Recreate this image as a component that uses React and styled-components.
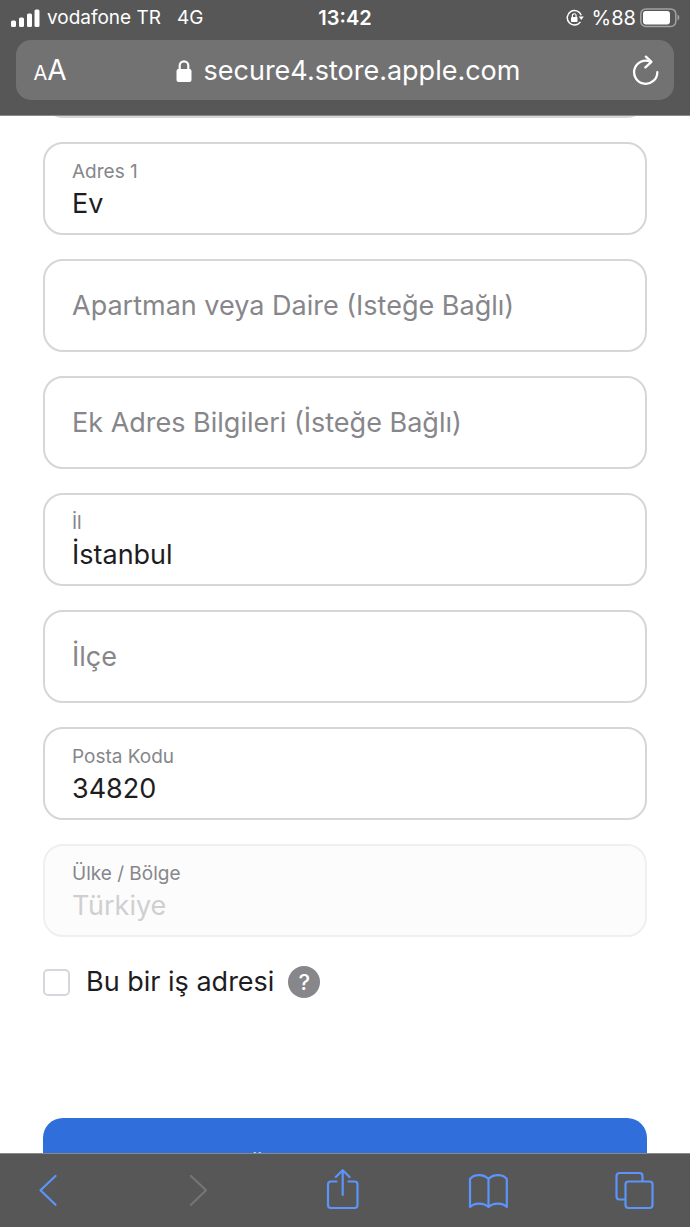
import React from "react";
import styled, { createGlobalStyle } from "styled-components";

const GlobalStyle = createGlobalStyle`
  *, *::before, *::after { box-sizing: border-box; }
  body {
    margin: 0;
    background: #fff;
    color: #1d1d1f;
    font-family: Inter, "Liberation Sans", sans-serif;
    letter-spacing: normal;
  }
  button, input { font: inherit; }
`;

const Screen = styled.div`
  display: flex;
  flex-direction: column;
  height: 100vh;
  overflow: hidden;
`;

const TopBar = styled.header`
  flex: none;
  padding: 0 16px;
  background: #575757;
  border-bottom: 1px solid #8a8a8a;
  color: #fff;
`;

const StatusBar = styled.div`
  display: grid;
  grid-template-columns: 1fr auto 1fr;
  align-items: center;
  height: 40px;
  padding-bottom: 5px;
  margin: 0 -6px;
  font-size: 20px;
  line-height: 24px;
`;

const StatusGroup = styled.div`
  display: flex;
  align-items: center;
  justify-content: ${(p) => (p.$end ? "flex-end" : "flex-start")};
  gap: ${(p) => p.$gap}px;
`;

const Carrier = styled.span`
  font-size: 19px;
`;

const Clock = styled.time`
  font-weight: 600;
`;

const AddressBar = styled.div`
  display: grid;
  grid-template-columns: 40px 1fr 40px;
  align-items: center;
  height: 60px;
  margin-bottom: 15px;
  padding: 2px 8px 0 14px;
  border-radius: 15px;
  background: #727272;
`;

const BarButton = styled.button`
  display: flex;
  align-items: center;
  justify-content: center;
  padding: 0;
  border: 0;
  background: none;
  color: inherit;
`;

const TextSizeButton = styled(BarButton)`
  align-items: baseline;
  font-size: 28px;
  line-height: 32px;
  small { font-size: 20px; }
`;

const Address = styled(BarButton)`
  gap: 12px;
  font-size: 27px;
  line-height: 36px;
`;

const Page = styled.main`
  flex: 1;
  min-height: 0;
  overflow: hidden;
`;

const Form = styled.form`
  display: flex;
  flex-direction: column;
  gap: 24px;
  margin-top: -91px;
  padding: 0 43px;
`;

const FieldBox = styled.div`
  display: flex;
  flex-direction: column;
  justify-content: ${(p) => (p.$labelled ? "flex-start" : "center")};
  height: 93px;
  padding: ${(p) => (p.$labelled ? "16px 27px 0" : "0 27px")};
  border: 2px solid ${(p) => (p.$disabled ? "#efeff0" : "#d6d6d9")};
  border-radius: 20px;
  background: ${(p) => (p.$disabled ? "#fcfcfc" : "#fff")};
`;

const FieldLabel = styled.label`
  color: #86868b;
  font-size: 19px;
  line-height: 24px;
`;

const FieldInput = styled.input`
  width: 100%;
  height: 38px;
  padding: 0;
  border: 0;
  outline: 0;
  background: none;
  color: #1d1d1f;
  font-size: 27px;
  &::placeholder { color: #86868b; opacity: 1; }
  &:disabled { color: #cfcfd1; }
`;

const CheckRow = styled.div`
  display: flex;
  align-items: center;
  height: 32px;
  margin-top: 5px;
`;

const CheckBox = styled.input`
  appearance: none;
  width: 27px;
  height: 27px;
  margin: 0 16px 0 0;
  border: 2px solid #d6d6dc;
  border-radius: 5px;
  background: #fff;
`;

const CheckLabel = styled.label`
  font-size: 27px;
  line-height: 32px;
`;

const HelpButton = styled.button`
  width: 32px;
  height: 32px;
  margin-left: 14px;
  padding: 0;
  border: 0;
  border-radius: 50%;
  background: #86868b;
  color: #fff;
  font-size: 22px;
  font-weight: 500;
  line-height: 32px;
`;

const SubmitButton = styled.button`
  height: 96px;
  margin-top: 96px;
  border: 0;
  border-radius: 20px;
  background: #2f6edb;
  color: #fff;
  font-size: 24px;
`;

const Toolbar = styled.nav`
  display: flex;
  flex: none;
  align-items: center;
  justify-content: space-between;
  height: 74px;
  padding: 0 36px 2px 28px;
  border-top: 1px solid #8a8a8a;
  background: #575757;
  color: #5b95fb;
`;

const ToolButton = styled.button`
  display: flex;
  padding: 0;
  border: 0;
  background: none;
  color: inherit;
  &:disabled { color: #757575; }
`;

const ToolIcon = ({ d, children }) => (
  <svg width="40" height="44" viewBox="0 0 40 44" fill="none" stroke="currentColor" strokeWidth="2.2" strokeLinecap="round" strokeLinejoin="round" aria-hidden="true">
    {d && <path d={d} />}
    {children}
  </svg>
);

const SignalIcon = () => (
  <svg width="31" height="20" viewBox="0 0 31 20" fill="#fff" aria-hidden="true">
    <rect x="1" y="12.5" width="5" height="6.5" rx="1.5" />
    <rect x="9" y="9.5" width="5" height="9.5" rx="1.5" />
    <rect x="17" y="5.5" width="5" height="13.5" rx="1.5" />
    <rect x="24.5" y="1.5" width="5" height="17.5" rx="1.5" />
  </svg>
);

const RotationLockIcon = () => (
  <svg width="18" height="18" viewBox="0 0 18 18" aria-hidden="true">
    <path d="M15.2 6.2A7.2 7.2 0 1 0 14.4 12.8" fill="none" stroke="#fff" strokeWidth="1.5" />
    <path d="M12.7 7.5h5.1l-2.5 3.4z" fill="#fff" />
    <rect x="5" y="8" width="6.5" height="5" rx="0.8" fill="#fff" />
    <path d="M6.4 8V6.6a1.85 1.85 0 0 1 3.7 0V8" fill="none" stroke="#fff" strokeWidth="1.2" />
  </svg>
);

const BatteryIcon = () => (
  <svg width="40" height="20" viewBox="0 0 40 20" aria-hidden="true">
    <rect x="0.8" y="0.9" width="35" height="17.6" rx="5" fill="none" stroke="#a2a2a2" strokeWidth="1.5" />
    <rect x="3" y="3" width="27" height="13.4" rx="2.8" fill="#fff" />
    <path d="M37.5 6.5c2.4.8 2.4 5.2 0 6z" fill="#a2a2a2" />
  </svg>
);

const LockIcon = () => (
  <svg width="16" height="24" viewBox="0 0 16 24" aria-hidden="true">
    <rect x="0.5" y="10" width="15" height="13" rx="2" fill="#fff" />
    <path d="M3.7 11V6.6a4.3 4.3 0 0 1 8.6 0V11" fill="none" stroke="#fff" strokeWidth="2.2" />
  </svg>
);

const ReloadIcon = () => (
  <svg width="28" height="32" viewBox="0 0 28 32" fill="none" stroke="#fff" strokeWidth="2.3" strokeLinecap="round" strokeLinejoin="round" aria-hidden="true">
    <path d="M25.3 17.2A11.6 11.6 0 1 1 18.4 6.6" />
    <path d="M13.9 1.6L19.4 6.8L13.4 12.4" />
  </svg>
);

const fields = [
  { id: "address1", label: "Adres 1", value: "Ev" },
  { id: "apartment", placeholder: "Apartman veya Daire (Isteğe Bağlı)" },
  { id: "extra", placeholder: "Ek Adres Bilgileri (İsteğe Bağlı)" },
  { id: "province", label: "İl", value: "İstanbul" },
  { id: "district", placeholder: "İlçe" },
  { id: "postcode", label: "Posta Kodu", value: "34820" },
  { id: "country", label: "Ülke / Bölge", value: "Türkiye", disabled: true },
];

const Field = ({ id, label, value, placeholder, disabled }) => (
  <FieldBox $labelled={Boolean(label)} $disabled={disabled}>
    {label && <FieldLabel htmlFor={id}>{label}</FieldLabel>}
    <FieldInput
      id={id}
      type="text"
      defaultValue={value}
      placeholder={placeholder}
      aria-label={label ? undefined : placeholder}
      disabled={disabled}
    />
  </FieldBox>
);

export default function App() {
  return (
    <Screen lang="tr">
      <GlobalStyle />
      <TopBar>
        <StatusBar>
          <StatusGroup $gap={16}>
            <StatusGroup $gap={6}>
              <SignalIcon />
              <Carrier>vodafone TR</Carrier>
            </StatusGroup>
            <Carrier>4G</Carrier>
          </StatusGroup>
          <Clock>13:42</Clock>
          <StatusGroup $end $gap={8}>
            <RotationLockIcon />
            <StatusGroup $gap={4}>
              <span>%88</span>
              <BatteryIcon />
            </StatusGroup>
          </StatusGroup>
        </StatusBar>
        <AddressBar>
          <TextSizeButton type="button"><small>A</small>A</TextSizeButton>
          <Address type="button">
            <LockIcon />
            <span>secure4.store.apple.com</span>
          </Address>
          <BarButton type="button"><ReloadIcon /></BarButton>
        </AddressBar>
      </TopBar>

      <Page>
        <Form onSubmit={(e) => e.preventDefault()}>
          <FieldBox />
          {fields.map((f) => <Field key={f.id} {...f} />)}
          <CheckRow>
            <CheckBox id="business" type="checkbox" />
            <CheckLabel htmlFor="business">Bu bir iş adresi</CheckLabel>
            <HelpButton type="button">?</HelpButton>
          </CheckRow>
          <SubmitButton type="submit">Ödemeye Devam</SubmitButton>
        </Form>
      </Page>

      <Toolbar>
        <ToolButton type="button"><ToolIcon d="M27.5 8L12.5 22.3L27.5 36.8" /></ToolButton>
        <ToolButton type="button" disabled><ToolIcon d="M16 8L31 22.3L16 36.8" /></ToolButton>
        <ToolButton type="button">
          <ToolIcon d="M15.5 13.5H10a3 3 0 0 0-3 3V37a3 3 0 0 0 3 3H33.5a3 3 0 0 0 3-3V16.5a3 3 0 0 0-3-3H27.5M21.7 27V2.8M14.8 9L21.7 2.2L28.6 9" />
        </ToolButton>
        <ToolButton type="button">
          <ToolIcon d="M2 39V11C6 5.8 16 5.8 20.5 11C25 5.8 35 5.8 38.8 11V39C35 34.4 25 34.4 20.5 39C16 34.4 6 34.4 2 39M20.5 11V39" />
        </ToolButton>
        <ToolButton type="button">
          <ToolIcon d="M11 31.5H5.5a3 3 0 0 1-3-3V8a3 3 0 0 1 3-3H25.5a3 3 0 0 1 3 3V13">
            <rect x="11.5" y="13.5" width="27" height="26.5" rx="3" />
          </ToolIcon>
        </ToolButton>
      </Toolbar>
    </Screen>
  );
}
